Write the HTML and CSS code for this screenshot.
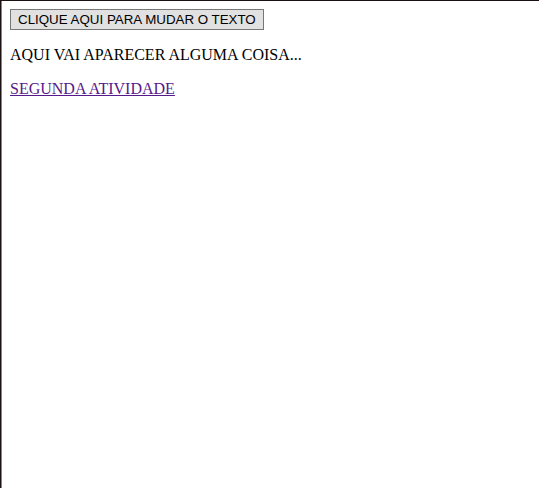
FILE: index.html
```html
<!DOCTYPE html>
<html lang="pt">
<head>
<meta charset="utf-8">
<title>Atividade</title>
<link rel="stylesheet" href="styles.css">
</head>
<body class="page">
<button class="btn" type="button">CLIQUE AQUI PARA MUDAR O TEXTO</button>
<p class="text">AQUI VAI APARECER ALGUMA COISA...</p>
<a class="link" href="#">SEGUNDA ATIVIDADE</a>
</body>
</html>
```
FILE: styles.css
```css
html {
  height: 100%;
  box-sizing: border-box;
  border-top: 1px solid #1c1010;
  border-left: 1px solid #1c1010;
  background: #fff;
}
.page {
  margin: 0;
  padding: 8px 8px 8px 8px;
  border-left: 1px solid #c86a6a;
  min-height: 100%;
  box-sizing: border-box;
  font-family: "Liberation Serif", "Times New Roman", serif;
  font-size: 16px;
  color: #000;
}
.btn {
  font-family: "Liberation Sans", Arial, sans-serif;
  font-size: 13.33px;
  color: #000;
  background: #e1e1e1;
  border: 1px solid #777;
  border-radius: 0;
  padding: 1px 7px;
  height: 21px;
  line-height: 17px;
  margin: 0;
}
.text {
  margin: 16px 0;
}
.link {
  color: #551a8b;
  text-decoration: underline;
}
```
